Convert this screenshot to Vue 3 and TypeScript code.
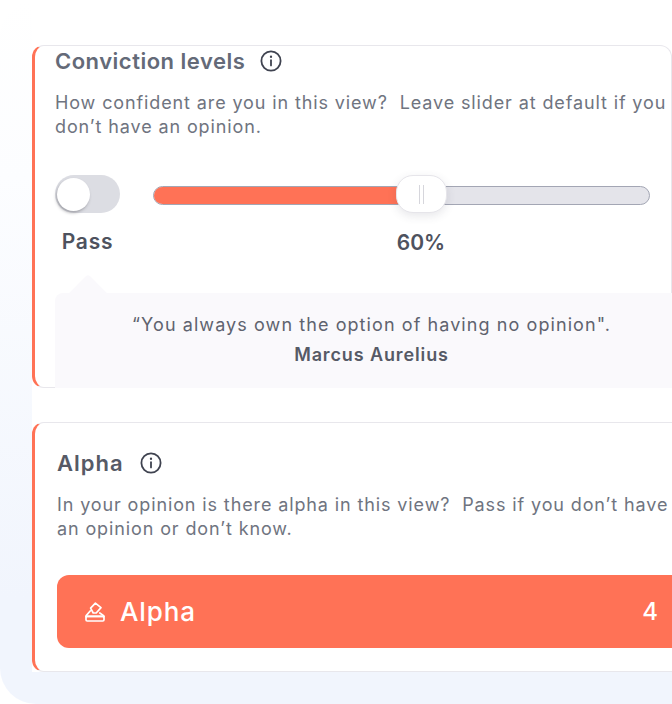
<script setup lang="ts">
const fillPercent: number = 49.2
</script>

<template>
  <div class="page">
    <div class="panel">
      <div class="column">
        <section class="card conviction">
          <div class="heading">
            <h2>Conviction levels</h2>
            <svg class="info" viewBox="0 0 22 22" width="22" height="22" fill="none" stroke="#3f4350" stroke-width="1.8" stroke-linecap="round">
              <circle cx="11" cy="11" r="9.6" />
              <path d="M11 10.2v5.2" />
              <path d="M11 6.6v.3" stroke-width="2.2" />
            </svg>
          </div>
          <p class="copy"><span>How confident are you in this view?&nbsp; Leave slider at default if you</span><span>don’t have an opinion.</span></p>
          <div class="controls">
            <div class="pass">
              <div class="toggle"><div class="knob"></div></div>
              <div class="label pass-label">Pass</div>
            </div>
            <div class="slider-wrap">
              <div class="track">
                <div class="fill" :style="{ width: fillPercent + '%' }"></div>
                <div class="thumb"><i></i><i></i></div>
              </div>
              <div class="label percent">60%</div>
            </div>
          </div>
          <div class="quote">
            <div class="quote-text">“You always own the option of having no opinion".</div>
            <div class="quote-author">Marcus Aurelius</div>
          </div>
        </section>

        <section class="card alpha">
          <div class="heading">
            <h2>Alpha</h2>
            <svg class="info" viewBox="0 0 22 22" width="22" height="22" fill="none" stroke="#3f4350" stroke-width="1.8" stroke-linecap="round">
              <circle cx="11" cy="11" r="9.6" />
              <path d="M11 10.2v5.2" />
              <path d="M11 6.6v.3" stroke-width="2.2" />
            </svg>
          </div>
          <p class="copy"><span>In your opinion is there alpha in this view?&nbsp; Pass if you don’t have</span><span>an opinion or don’t know.</span></p>
          <button class="vote" type="button">
            <svg viewBox="0 0 20 20" width="20" height="20" fill="none" stroke="#fff" stroke-width="1.7" stroke-linejoin="round" stroke-linecap="round">
              <path d="M5.6 6.2 10.4 1.2 16 5.6l-4.8 5.4H8.2z" />
              <path d="M5.4 8.8 1.2 13.6v1.2M14.8 11l3.8 2.6v1.2" />
              <path d="M1 14.4h18" />
              <rect x="1" y="14.4" width="18" height="4.6" rx="1.2" />
            </svg>
            <span class="vote-name">Alpha</span>
            <span class="vote-count">4</span>
          </button>
        </section>
      </div>
    </div>
  </div>
</template>

<style>
html, body { margin: 0; background: #fff; }
</style>

<style scoped>
.page {
  width: 672px;
  height: 704px;
  overflow: hidden;
  background: #fff;
  font-family: Inter, "Noto Sans", sans-serif;
}
.panel {
  width: 720px;
  height: 704px;
  box-sizing: border-box;
  padding: 0 0 32px 32px;
  border-radius: 36px;
  background: linear-gradient(180deg, #ffffff 0%, #fcfdff 25%, #f1f5fd 85%);
}
.column {
  height: 100%;
  box-sizing: border-box;
  padding-top: 45px;
  display: flex;
  flex-direction: column;
  gap: 34px;
  background: #fff;
}
.card {
  position: relative;
  flex: none;
  box-sizing: border-box;
  background: #fff;
  border: 1px solid #e8e7ec;
  border-left: 3px solid #ff7256;
  border-radius: 12px;
}
.conviction {
  width: 640px;
  height: 343px;
  padding: 1px 0 0 20px;
}
.alpha {
  width: 688px;
  height: 250px;
  padding: 26px 0 0 22px;
}
.heading {
  display: flex;
  align-items: center;
  gap: 15px;
  height: 28px;
}
.alpha .heading { gap: 16px; }
h2 {
  margin: 0;
  font-size: 22px;
  line-height: 28px;
  font-weight: 600;
  letter-spacing: 0.5px;
  color: #646a78;
}
.alpha h2 {
  color: #565a66;
  letter-spacing: 1px;
}
.copy {
  margin: 16px 0 0;
  font-size: 18px;
  line-height: 24px;
  letter-spacing: 0.88px;
  color: #6f7480;
}
.alpha .copy { margin-top: 16px; }
.copy span {
  display: block;
  white-space: nowrap;
}
.controls {
  display: flex;
  gap: 33px;
  margin-top: 36px;
}
.pass { width: 65px; }
.toggle {
  width: 65px;
  height: 38px;
  border-radius: 19px;
  background: #dcdde3;
  display: flex;
  align-items: center;
  padding-left: 2px;
  box-sizing: border-box;
}
.knob {
  width: 33px;
  height: 33px;
  border-radius: 50%;
  background: #fff;
  box-shadow: -1px 2px 3px rgba(60, 60, 70, 0.35);
}
.label {
  margin-top: 15px;
  font-size: 21px;
  line-height: 28px;
  font-weight: 600;
  color: #4e525e;
  text-align: center;
  white-space: nowrap;
}
.pass-label { letter-spacing: 0.8px; }
.slider-wrap { width: 497px; }
.percent {
  width: 536px;
  margin-top: 24px;
}
.track {
  position: relative;
  height: 19px;
  margin-top: 11px;
  box-sizing: border-box;
  border: 1px solid #a3a6b4;
  border-radius: 10px;
  background: #e4e4ea;
}
.fill {
  height: 100%;
  border-radius: 9px 0 0 9px;
  background: #ff7256;
}
.thumb {
  position: absolute;
  left: 242px;
  top: -12px;
  width: 51px;
  height: 38px;
  box-sizing: border-box;
  border: 1px solid #e6e5ea;
  border-radius: 17px;
  background: #fff;
  box-shadow: 0 3px 10px rgba(60, 60, 80, 0.12);
  display: flex;
  justify-content: center;
  align-items: center;
  gap: 3px;
}
.thumb i {
  display: block;
  width: 1px;
  height: 19px;
  background: #d6d6dc;
}
.quote {
  position: absolute;
  left: 20px;
  top: 247px;
  width: 633px;
  height: 95px;
  box-sizing: border-box;
  padding-top: 17px;
  background: #faf9fc;
  border-radius: 8px 0 0 0;
  text-align: center;
}
.quote::before {
  content: "";
  position: absolute;
  left: 19px;
  top: -13px;
  width: 28px;
  height: 28px;
  background: #faf9fc;
  transform: rotate(45deg);
  border-radius: 3px 0 0 0;
}
.quote-text,
.quote-author {
  position: relative;
  font-size: 18px;
  line-height: 30px;
  letter-spacing: 1.08px;
  color: #5f636f;
}
.quote-author {
  font-weight: 600;
  letter-spacing: 0.88px;
  color: #565a66;
}
.vote {
  display: flex;
  align-items: center;
  width: 660px;
  height: 73px;
  margin-top: 34px;
  padding: 0 0 0 28px;
  border: 0;
  border-radius: 12px;
  background: #ff7256;
  color: #fff;
  font-family: inherit;
}
.vote svg { flex: none; }
.vote-name {
  margin-left: 15px;
  font-size: 26px;
  font-weight: 500;
  letter-spacing: 0.9px;
}
.vote-count {
  margin-left: auto;
  margin-right: 59px;
  font-size: 24px;
  font-weight: 500;
}
</style>
